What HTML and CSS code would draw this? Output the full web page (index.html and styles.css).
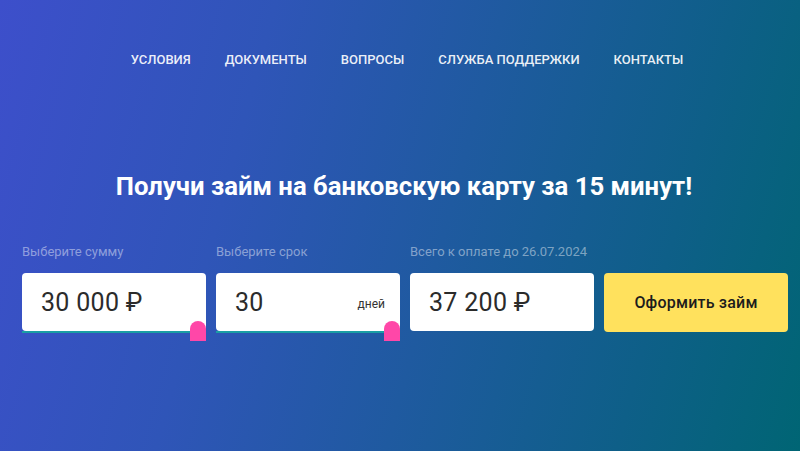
FILE: index.html
```html
<!DOCTYPE html>
<html lang="ru">
<head>
<meta charset="utf-8">
<title>Займ</title>
<link rel="stylesheet" href="styles.css">
</head>
<body>
<div class="page">
  <nav class="nav">
    <a href="#">Условия</a>
    <a href="#">Документы</a>
    <a href="#">Вопросы</a>
    <a href="#">Служба поддержки</a>
    <a href="#">Контакты</a>
  </nav>
  <h1 class="title">Получи займ на банковскую карту за 15 минут!</h1>
  <div class="calc">
    <div class="field">
      <div class="label">Выберите сумму</div>
      <div class="box">
        <span class="value">30 000 ₽</span>
        <span class="track"></span>
        <span class="thumb"></span>
      </div>
    </div>
    <div class="field">
      <div class="label">Выберите срок</div>
      <div class="box">
        <span class="value">30</span>
        <span class="unit">дней</span>
        <span class="track"></span>
        <span class="thumb"></span>
      </div>
    </div>
    <div class="field">
      <div class="label">Всего к оплате до 26.07.2024</div>
      <div class="box">
        <span class="value">37 200 ₽</span>
      </div>
    </div>
    <div class="field field-btn">
      <button class="btn">Оформить займ</button>
    </div>
  </div>
</div>
</body>
</html>
```
FILE: styles.css
```css
html, body {
  margin: 0;
  padding: 0;
}
body {
  font-family: Roboto, "Noto Sans", Arial, sans-serif;
  width: 800px;
  height: 451px;
  overflow: hidden;
}
.page {
  height: 451px;
  background: linear-gradient(105deg, #3d4fcb 0%, #2f55b8 30%, #1f5aa0 55%, #0e5f88 80%, #006574 100%);
  display: flex;
  flex-direction: column;
}
.nav {
  display: flex;
  justify-content: center;
  gap: 34px;
  padding: 50px 0 0 14px;
  line-height: 20px;
}
.nav a {
  color: rgba(255, 255, 255, 0.92);
  text-decoration: none;
  text-transform: uppercase;
  font-size: 13px;
  font-weight: 500;
}
.title {
  margin: 101px 0 0 8px;
  text-align: center;
  color: #fff;
  font-size: 25.7px;
  font-weight: 700;
  line-height: 30px;
}
.calc {
  display: grid;
  grid-template-columns: repeat(4, 184px);
  gap: 10px;
  padding-left: 22px;
  margin-top: 43px;
}
.field {
  display: flex;
  flex-direction: column;
}
.label {
  font-size: 13px;
  line-height: 16px;
  color: rgba(255, 255, 255, 0.45);
  margin-bottom: 13px;
}
.box {
  position: relative;
  height: 58px;
  background: #fff;
  border-radius: 4px;
  display: flex;
  align-items: center;
  justify-content: space-between;
  padding: 0 15px 0 19px;
  box-sizing: border-box;
}
.value {
  font-size: 25px;
  color: #2b2b2b;
  letter-spacing: 0.3px;
}
.unit {
  font-size: 12px;
  color: #333;
  margin-top: 3px;
}
.track {
  position: absolute;
  left: 0;
  right: 16px;
  bottom: -2px;
  height: 2px;
  background: #1a9ea4;
}
.thumb {
  position: absolute;
  right: 0;
  bottom: -10px;
  width: 16px;
  height: 20px;
  background: #ff47a8;
  border-radius: 8px 8px 0 0;
}
.field-btn {
  justify-content: flex-end;
}
.btn {
  height: 59px;
  border: none;
  border-radius: 4px;
  background: #ffe15d;
  color: #1c1c1c;
  font-family: Roboto, "Noto Sans", Arial, sans-serif;
  font-size: 16px;
  font-weight: 500;
  letter-spacing: 0.2px;
  cursor: pointer;
  margin-bottom: -1px;
}
```
